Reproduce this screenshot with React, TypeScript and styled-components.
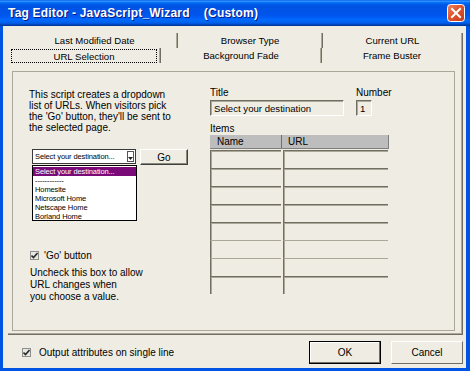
import styled, { createGlobalStyle } from "styled-components";

const GlobalStyle = createGlobalStyle`
  html, body {
    margin: 0;
    padding: 0;
  }
  body {
    font-family: "Liberation Sans", Arial, sans-serif;
    font-size: 10px;
    color: #000;
    background: #fff;
  }
  * {
    box-sizing: border-box;
  }
`;

const FACE = "#efede3";
const DARK = "#716f64";
const MID = "#aca899";

const Window = styled.div`
  width: 470px;
  height: 371px;
  display: flex;
  flex-direction: column;
  background: #0054e3;
`;

const TitleBar = styled.div`
  height: 26px;
  flex: none;
  display: flex;
  align-items: center;
  justify-content: space-between;
  padding: 0 5px 0 8px;
  background: linear-gradient(
    to bottom,
    #0058ee 0%,
    #3593ff 4%,
    #288eff 6%,
    #127dff 8%,
    #036ffc 10%,
    #0262ee 14%,
    #0057e5 20%,
    #0054e3 24%,
    #0055eb 56%,
    #005bf5 66%,
    #026afe 76%,
    #0062ef 86%,
    #0052d6 92%,
    #0040ab 96%,
    #003092 100%
  );
`;

const TitleText = styled.span`
  color: #fff;
  font-weight: bold;
  font-size: 12px;
  letter-spacing: 0.2px;
  white-space: pre;
  text-shadow: 1px 1px 0 #0a1883;
`;

const CloseIcon = styled.svg`
  display: block;
  flex: none;
`;

const Body = styled.div`
  flex: 1;
  margin: 0 4px 3px 3px;
  background: ${FACE};
  display: flex;
  flex-direction: column;
  padding: 7px 3px 0 5px;
`;

const TabRow = styled.div<{ $offset: number }>`
  height: 15px;
  display: flex;
  margin-left: ${(p) => p.$offset}px;
`;

const Tab = styled.div<{ $width: number }>`
  width: ${(p) => p.$width}px;
  display: flex;
  align-items: center;
  justify-content: center;
  font-size: 9.6px;
  border-right: 1px solid ${DARK};
  box-shadow: inset -1px 0 0 ${MID};
  white-space: nowrap;
`;

const FocusRect = styled.span`
  flex: 1;
  align-self: stretch;
  margin: 1px 3px 0 1px;
  border: 1px dotted #000;
  display: flex;
  align-items: center;
  justify-content: center;
`;

const Page = styled.div`
  height: 272px;
  flex: none;
  display: flex;
  padding: 8px 7px 3px 4px;
  border-right: 1px solid ${DARK};
  border-bottom: 1px solid ${DARK};
  box-shadow: inset -1px -1px 0 ${MID};
`;

const GroupBox = styled.div`
  flex: 1;
  display: flex;
  border: 1px solid ${MID};
  padding: 15px 0 0 16px;
`;

const LeftCol = styled.div`
  width: 181px;
  display: flex;
  flex-direction: column;
`;

const Paragraph = styled.p`
  margin: 2px 0 0;
  line-height: 11px;
  white-space: nowrap;
`;

const SelectRow = styled.div`
  margin: 16px 0 0 3px;
  display: flex;
  gap: 4px;
  position: relative;
`;

const SelectBox = styled.div`
  width: 104px;
  height: 15px;
  background: #fff;
  border: 1px solid #3a3a3a;
  display: flex;
  align-items: center;
  justify-content: space-between;
  padding: 0 1px 0 2px;
  font-size: 7.5px;
  letter-spacing: -0.1px;
  white-space: nowrap;
`;

const ArrowBox = styled.div`
  width: 7px;
  height: 11px;
  border: 1px solid #555;
  background: #fff;
  display: flex;
  align-items: flex-end;
  justify-content: center;
  padding-bottom: 1px;
`;

const GoButton = styled.div`
  width: 48px;
  height: 16px;
  border: 1px solid;
  border-color: #fff #404040 #404040 #fff;
  box-shadow: inset -1px -1px 0 #8a8878;
  display: flex;
  align-items: center;
  justify-content: center;
  font-size: 10px;
`;

const DropList = styled.div`
  position: absolute;
  top: 16px;
  left: 0;
  width: 105px;
  height: 56px;
  border: 1px solid #000;
  background: #fff;
  font-size: 7.5px;
  letter-spacing: -0.1px;
  padding-top: 1px;
`;

const ListItem = styled.div<{ $selected?: boolean }>`
  height: 9px;
  line-height: 9px;
  padding-left: 2px;
  white-space: nowrap;
  background: ${(p) => (p.$selected ? "#7a0a78" : "transparent")};
  color: ${(p) => (p.$selected ? "#fff" : "#000")};
`;

const CheckRow = styled.label<{ $top: number; $gap: number }>`
  display: flex;
  align-items: center;
  gap: ${(p) => p.$gap}px;
  margin-top: ${(p) => p.$top}px;
  margin-left: 1px;
  height: 12px;
  white-space: nowrap;
`;

const CheckBox = styled.span`
  width: 9px;
  height: 9px;
  border: 1px solid #8f8f8f;
  background: #e8e8e2;
  display: flex;
  align-items: center;
  justify-content: center;
`;

const HelpText = styled.p`
  margin: 6px 0 0 1px;
  line-height: 12px;
  white-space: nowrap;
`;

const RightCol = styled.div`
  width: 180px;
  display: flex;
  flex-direction: column;
`;

const FieldRow = styled.div`
  display: flex;
  gap: 12px;
`;

const Field = styled.div`
  display: flex;
  flex-direction: column;
`;

const Label = styled.div<{ $top?: number }>`
  line-height: 11px;
  margin-top: ${(p) => p.$top ?? 0}px;
`;

const TextInput = styled.div<{ $width: number }>`
  width: ${(p) => p.$width}px;
  height: 16px;
  margin-top: 2px;
  border: 1px solid;
  border-color: ${DARK} #fff #fff ${DARK};
  box-shadow: inset 1px 1px 0 ${MID};
  padding-left: 3px;
  display: flex;
  align-items: center;
  font-size: 9.6px;
  white-space: nowrap;
`;

const Table = styled.div`
  width: 179px;
  margin-top: 1px;
  display: flex;
  flex-direction: column;
`;

const HeaderRow = styled.div`
  height: 14px;
  display: flex;
  background: #bdbdbd;
  border-bottom: 1px solid #7f7f7f;
  border-right: 1px solid #7f7f7f;
`;

const HeaderCell = styled.div<{ $width?: number; $pad: number }>`
  ${(p) => (p.$width ? `width: ${p.$width}px;` : "flex: 1;")}
  padding-left: ${(p) => p.$pad}px;
  display: flex;
  align-items: center;
  font-size: 10px;
  ${(p) => (p.$width ? "border-right: 1px solid #6f6f6f;" : "")}
`;

const Rows = styled.div`
  margin-top: 1px;
  display: flex;
  flex-direction: column;
`;

const Row = styled.div`
  height: 18px;
  display: flex;
  gap: 2px;
`;

const Cell = styled.div<{ $width: number; $faint?: boolean }>`
  width: ${(p) => p.$width}px;
  border-top: 1px solid ${(p) => (p.$faint ? MID : DARK)};
  border-left: 1px solid ${DARK};
  box-shadow: inset 1px ${(p) => (p.$faint ? 0 : 1)}px 0 ${MID};
`;

const Footer = styled.div`
  flex: 1;
  display: flex;
  align-items: center;
  padding: 1px 0 0 13px;
`;

const Spacer = styled.div`
  flex: 1;
`;

const DialogButton = styled.div<{ $default?: boolean }>`
  width: 72px;
  height: 23px;
  display: flex;
  align-items: center;
  justify-content: center;
  font-size: 10px;
  border: 1px solid;
  border-color: ${(p) => (p.$default ? "#000" : `#fff ${DARK} ${DARK} #fff`)};
  box-shadow: ${(p) => (p.$default ? `inset -1px -1px 0 ${DARK}, inset 1px 1px 0 #fff` : "none")};
  & + & {
    margin-left: 10px;
  }
`;

const Check = () => (
  <svg width="7" height="7" viewBox="0 0 7 7">
    <path d="M0.5 3.5 L2.5 5.5 L6.5 1" fill="none" stroke="#2a2a2a" strokeWidth="1.6" />
  </svg>
);

const rowTops = [false, false, false, false, false, true, true, false];

const App = () => {
  return (
    <>
      <GlobalStyle />
      <Window>
        <TitleBar>
          <TitleText>{"Tag Editor - JavaScript_Wizard    (Custom)"}</TitleText>
          <CloseIcon width="18" height="18" viewBox="0 0 18 18">
            <defs>
              <linearGradient id="closeFill" x1="0" y1="0" x2="1" y2="1">
                <stop offset="0" stopColor="#ee8662" />
                <stop offset="0.45" stopColor="#e0552c" />
                <stop offset="1" stopColor="#c53a1a" />
              </linearGradient>
            </defs>
            <rect x="0.5" y="0.5" width="17" height="17" rx="3" fill="url(#closeFill)" stroke="#ffffff" />
            <path d="M5 5 L13 13 M13 5 L5 13" stroke="#ffffff" strokeWidth="2" strokeLinecap="square" />
          </CloseIcon>
        </TitleBar>
        <Body>
          <TabRow $offset={4}>
            <Tab $width={166}>Last Modified Date</Tab>
            <Tab $width={145}>Browser Type</Tab>
            <Tab $width={140}>Current URL</Tab>
          </TabRow>
          <TabRow $offset={2}>
            <Tab $width={151}>
              <FocusRect>URL Selection</FocusRect>
            </Tab>
            <Tab $width={161}>Background Fade</Tab>
            <Tab $width={141}>Frame Buster</Tab>
          </TabRow>
          <Page>
            <GroupBox>
              <LeftCol>
                <Paragraph>
                  This script creates a dropdown
                  <br />
                  list of URLs. When visitors pick
                  <br />
                  the 'Go' button, they'll be sent to
                  <br />
                  the selected page.
                </Paragraph>
                <SelectRow>
                  <SelectBox>
                    <span>Select your destination...</span>
                    <ArrowBox>
                      <svg width="5" height="3" viewBox="0 0 5 3">
                        <path d="M0 0 H5 L2.5 3 Z" fill="#222" />
                      </svg>
                    </ArrowBox>
                  </SelectBox>
                  <GoButton>Go</GoButton>
                  <DropList>
                    <ListItem $selected>Select your destination...</ListItem>
                    <ListItem>------------</ListItem>
                    <ListItem>Homesite</ListItem>
                    <ListItem>Microsoft Home</ListItem>
                    <ListItem>Netscape Home</ListItem>
                    <ListItem>Borland Home</ListItem>
                  </DropList>
                </SelectRow>
                <CheckRow $top={84} $gap={5}>
                  <CheckBox>
                    <Check />
                  </CheckBox>
                  'Go' button
                </CheckRow>
                <HelpText>
                  Uncheck this box to allow
                  <br />
                  URL changes when
                  <br />
                  you choose a value.
                </HelpText>
              </LeftCol>
              <RightCol>
                <FieldRow>
                  <Field>
                    <Label>Title</Label>
                    <TextInput $width={134}>Select your destination</TextInput>
                  </Field>
                  <Field>
                    <Label>Number</Label>
                    <TextInput $width={16}>1</TextInput>
                  </Field>
                </FieldRow>
                <Label $top={7}>Items</Label>
                <Table>
                  <HeaderRow>
                    <HeaderCell $width={72} $pad={7}>
                      Name
                    </HeaderCell>
                    <HeaderCell $pad={6}>URL</HeaderCell>
                  </HeaderRow>
                  <Rows>
                    {rowTops.map((faint, i) => (
                      <Row key={i}>
                        <Cell $width={71} $faint={faint} />
                        <Cell $width={105} $faint={faint} />
                      </Row>
                    ))}
                  </Rows>
                </Table>
              </RightCol>
            </GroupBox>
          </Page>
          <Footer>
            <CheckRow $top={0} $gap={8}>
              <CheckBox>
                <Check />
              </CheckBox>
              Output attributes on single line
            </CheckRow>
            <Spacer />
            <DialogButton $default>OK</DialogButton>
            <DialogButton>Cancel</DialogButton>
          </Footer>
        </Body>
      </Window>
    </>
  );
};

export default App;
